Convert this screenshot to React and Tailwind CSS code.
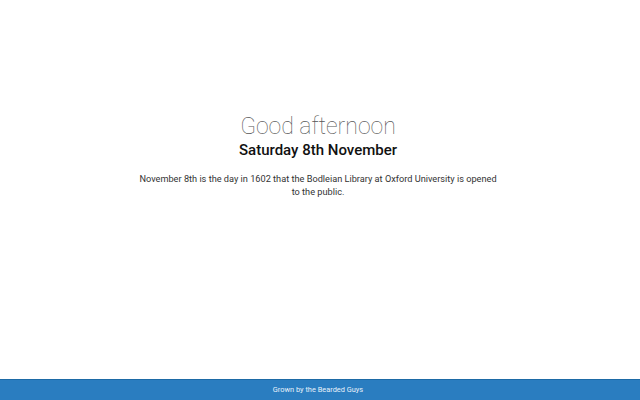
export default function App() {
  return (
    <div className="flex h-[400px] w-[640px] flex-col bg-white font-['Roboto',sans-serif]">
      <main className="flex flex-1 flex-col items-center pr-[4px] pt-[113px]">
        <h1 className="text-[23px] font-thin leading-[28px] text-[#555]">Good afternoon</h1>
        <h2 className="text-[15px] font-medium leading-[19px] text-[#111]">Saturday 8th November</h2>
        <p className="mt-[12px] w-[366px] text-center text-[9.2px] leading-[13px] text-[#333]">
          November 8th is the day in 1602 that the Bodleian Library at Oxford University is opened to the public.
        </p>
      </main>
      <footer className="flex h-[21px] items-center justify-center border-t border-[#1d6aa6] bg-[#2a7dc0] pr-[4px] text-[7.4px] text-[#e8f2fb]">
        Grown by the Bearded Guys
      </footer>
    </div>
  );
}
